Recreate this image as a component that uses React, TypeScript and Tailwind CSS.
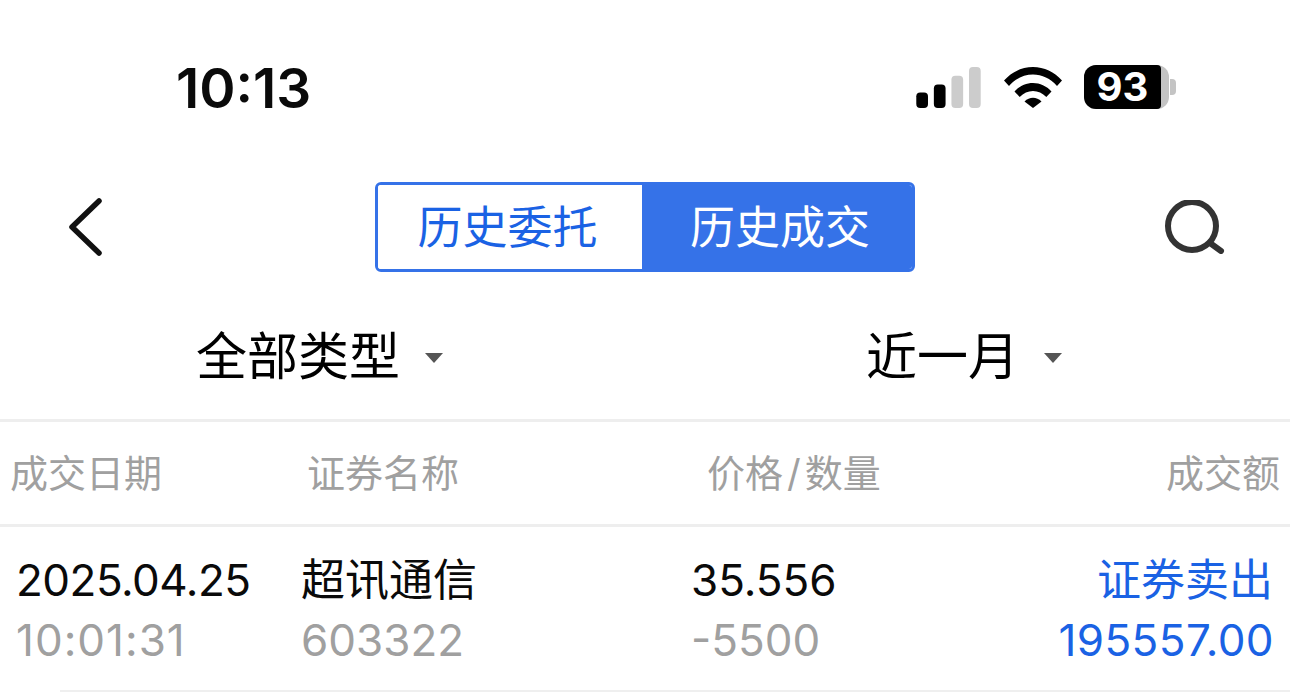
const font = "font-['Inter','Noto_Sans_CJK_SC',sans-serif]";

const SignalIcon = () => (
  <svg width="65" height="41" viewBox="0 0 66 42">
    <rect x="0" y="26" width="12" height="16" rx="4" fill="#000" />
    <rect x="18" y="18" width="12" height="24" rx="4" fill="#000" />
    <rect x="36" y="9" width="12" height="33" rx="4" fill="#ccc" />
    <rect x="54" y="0" width="12" height="42" rx="4" fill="#ccc" />
  </svg>
);

const WifiIcon = () => (
  <svg width="58" height="42" viewBox="0 0 58 42">
    <path d="M0 14.5C7.5 6 18 1 29 1s21.500 5 29 13.500l-5 5.500C46.500 12.500 38 8.500 29 8.500S11.500 12.500 5 20z" fill="#000" />
    <path d="M10.500 25.500C15.500 20 22 17 29 17s13.500 3 18.500 8.500l-5.200 5.500C38.500 27 34 25 29 25s-9.500 2-13.300 6z" fill="#000" />
    <path d="M20.500 35.500C23 33 26 31.800 29 31.800s6 1.200 8.500 3.700L29 42z" fill="#000" />
  </svg>
);

const Battery = () => (
  <div className="flex items-center">
    <div className="flex h-[44px] w-[85px] rounded-[12px] bg-[#c4c4c4]">
      <div className="flex h-full w-[77px] items-center justify-center rounded-l-[12px] rounded-r-[4px] bg-black text-[40px] font-bold leading-none text-white">
        93
      </div>
    </div>
    <div className="ml-[1px] h-[16px] w-[6px] rounded-r-[4px] bg-[#c4c4c4]" />
  </div>
);

const BackIcon = () => (
  <svg width="34" height="60" viewBox="0 0 34 60" fill="none">
    <path d="M31 4 4 30l27 26" stroke="#111" strokeWidth="5.500" strokeLinecap="round" strokeLinejoin="round" />
  </svg>
);

const SearchIcon = () => (
  <svg width="62" height="54" viewBox="0 0 62 54" fill="none">
    <circle cx="29" cy="26" r="24" stroke="#333" strokeWidth="6" />
    <path d="M47 43l11 8" stroke="#333" strokeWidth="6" strokeLinecap="round" />
  </svg>
);

const Caret = () => <div className="ml-[25px] h-0 w-0 border-x-[9px] border-t-[10px] border-x-transparent border-t-[#555]" />;

export default function App() {
  return (
    <div className={`h-[695px] w-[1290px] overflow-hidden bg-white ${font}`}>
      {/* status bar */}
      <div className="flex h-[176px] items-center pl-[176px] pr-[114px]">
        <span className="text-[55px] font-semibold leading-none text-[#0a0a0a]">10:13</span>
        <div className="mb-[2px] ml-auto flex items-center">
          <SignalIcon />
          <div className="ml-[23px]"><WifiIcon /></div>
          <div className="ml-[22px]"><Battery /></div>
        </div>
      </div>

      {/* nav */}
      <div className="mt-[6px] flex h-[90px] items-center pl-[68px] pr-[65px]">
        <BackIcon />
        <div className="ml-[273px] flex h-[90px] w-[540px] overflow-hidden rounded-[6px] border-[3px] border-[#3572e8] text-[45px]">
          <div className="flex w-[264px] items-center justify-center bg-white pr-[5px] pt-[1px] text-[#1a62e4]">历史委托</div>
          <div className="flex flex-1 items-center justify-center bg-[#3572e8] pl-[6px] pt-[1px] text-white">历史成交</div>
        </div>
        <div className="ml-auto"><SearchIcon /></div>
      </div>

      {/* filters */}
      <div className="flex h-[150px] items-center border-b-[3px] border-[#eeeeee] pt-[24px] text-[51px] text-black">
        <div className="flex w-[866px] items-center pl-[196px]">
          全部类型
          <Caret />
        </div>
        <div className="flex items-center">
          近一月
          <Caret />
        </div>
      </div>

      {/* table header */}
      <div className="flex h-[105px] items-center border-b-[3px] border-[#eeeeee] text-[38px] text-[#a0a0a0]">
        <div className="w-[307px] pl-[10px]">成交日期</div>
        <div className="w-[400px]">证券名称</div>
        <div>价格<span className="px-[4px]">/</span>数量</div>
        <div className="ml-auto pr-[10px]">成交额</div>
      </div>

      {/* row */}
      <div className="flex h-[163px] items-start pt-[23px] text-[44px] leading-[60px]">
        <div className="w-[301px] pl-[16px]">
          <div className="h-[60px] tracking-[-0.5px] text-[#0a0a0a]">2025.04.25</div>
          <div className="h-[60px] tracking-[1px] text-[#a0a0a0]">10:01:31</div>
        </div>
        <div className="w-[390px]">
          <div className="h-[60px] text-[#0a0a0a]">超讯通信</div>
          <div className="h-[60px] text-[#a0a0a0]">603322</div>
        </div>
        <div>
          <div className="h-[60px] text-[#0a0a0a]">35.556</div>
          <div className="h-[60px] text-[#a0a0a0]">-5500</div>
        </div>
        <div className="ml-auto pr-[17px] text-right text-[#1a62e4]">
          <div className="h-[60px]">证券卖出</div>
          <div className="-mr-[1px] h-[60px] tracking-[0.4px]">195557.00</div>
        </div>
      </div>
      <div className="ml-[60px] h-[2px] bg-[#efefef]" />
    </div>
  );
}
